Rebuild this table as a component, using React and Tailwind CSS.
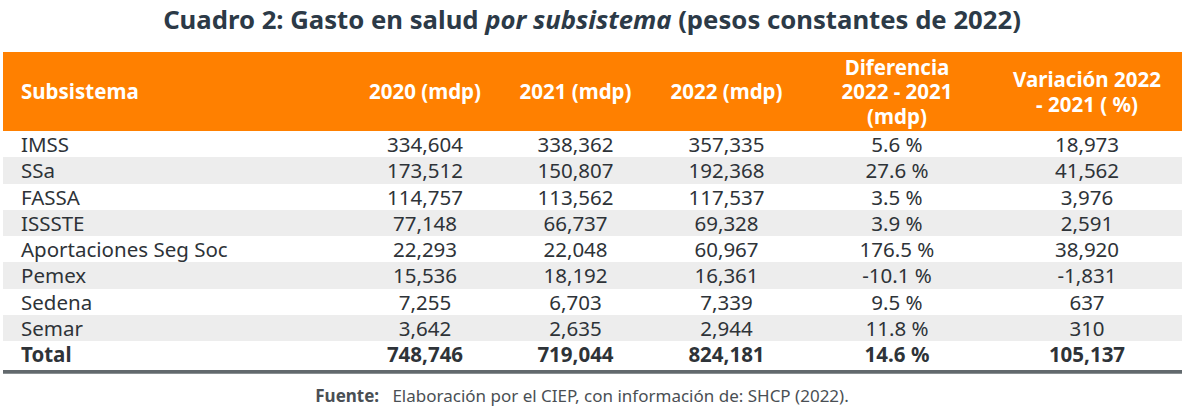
import React from 'react';

const rows = [
  ['IMSS', '334,604', '338,362', '357,335', '5.6 %', '18,973'],
  ['SSa', '173,512', '150,807', '192,368', '27.6 %', '41,562'],
  ['FASSA', '114,757', '113,562', '117,537', '3.5 %', '3,976'],
  ['ISSSTE', '77,148', '66,737', '69,328', '3.9 %', '2,591'],
  ['Aportaciones Seg Soc', '22,293', '22,048', '60,967', '176.5 %', '38,920'],
  ['Pemex', '15,536', '18,192', '16,361', '-10.1 %', '-1,831'],
  ['Sedena', '7,255', '6,703', '7,339', '9.5 %', '637'],
  ['Semar', '3,642', '2,635', '2,944', '11.8 %', '310'],
];

const total = ['Total', '748,746', '719,044', '824,181', '14.6 %', '105,137'];

const cols = 'grid grid-cols-[347px_150px_151px_151px_190px_190px]';

const App = () => {
  return (
    <div className="w-[1200px] h-[409px] bg-white text-[#2e3338] font-['Noto_Sans',sans-serif]">
      <h1 className="h-[52px] pr-[16px] text-center text-[25.7px] font-bold leading-[40px] text-[#2c3a47]">
        Cuadro 2: Gasto en salud <i>por subsistema</i> (pesos constantes de 2022)
      </h1>

      <div className="ml-[3px] w-[1179px]">
        <div className={`${cols} h-[79px] bg-[#ff8000] text-white font-bold text-[20.5px] leading-[24.5px] items-center`}>
          <div className="pl-[18px]">Subsistema</div>
          <div className="text-center">2020 (mdp)</div>
          <div className="text-center">2021 (mdp)</div>
          <div className="text-center">2022 (mdp)</div>
          <div className="text-center">Diferencia<br />2022 - 2021<br />(mdp)</div>
          <div className="text-center">Variación 2022<br />- 2021 ( %)</div>
        </div>

        {rows.map((r, i) => (
          <div
            key={r[0]}
            className={`${cols} h-[26.25px] text-[20.5px] leading-[26px] ${i % 2 === 1 ? 'bg-[#ededed]' : 'bg-white'}`}
          >
            <div className="pl-[18px]">{r[0]}</div>
            {r.slice(1).map((v, j) => (
              <div key={j} className="text-center">{v}</div>
            ))}
          </div>
        ))}

        <div className={`${cols} h-[26px] text-[20.5px] leading-[26px] font-bold`}>
          <div className="pl-[18px]">{total[0]}</div>
          {total.slice(1).map((v, j) => (
            <div key={j} className="text-center">{v}</div>
          ))}
        </div>

        <div className="mt-[3px] h-[4px] bg-[#62696d] border-b border-[#8a9093]" />
      </div>

      <p className="mt-[9px] text-center text-[17px] text-[#4a4f54] pr-[36px]">
        <span className="font-bold">Fuente:</span>&nbsp;&nbsp; Elaboración por el CIEP, con información de: SHCP (2022).
      </p>
    </div>
  );
};

export default App;
